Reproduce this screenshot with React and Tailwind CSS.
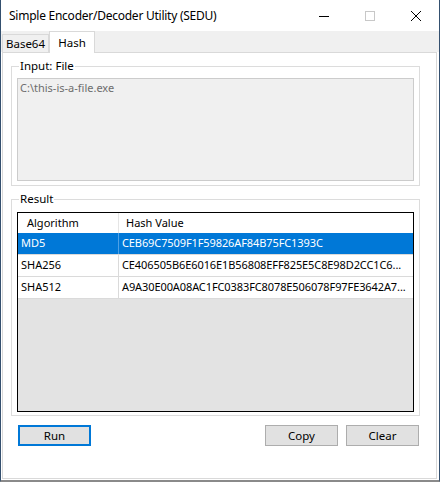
import React from "react";

// Fenêtre WinForms "SEDU" — onglet Hash sélectionné
const ROWS = [
  { algo: "MD5", hash: "CEB69C7509F1F59826AF84B75FC1393C", selected: true },
  { algo: "SHA256", hash: "CE406505B6E6016E1B56808EFF825E5C8E98D2CC1C6..." },
  { algo: "SHA512", hash: "A9A30E00A08AC1FC0383FC8078E506078F97FE3642A7..." },
];

function GroupBox({ label, className, children }) {
  return (
    <div className={"relative ml-[8px] w-[409px] border border-[#dcdcdc] " + className}>
      <span className="absolute left-[7px] -top-[9px] bg-white px-[1px] leading-[16px] text-[11.5px] text-black">{label}</span>
      {children}
    </div>
  );
}

function WinButton({ children, focused }) {
  return (
    <button
      className={
        "h-[21px] w-[73px] bg-[#e1e1e1] text-black text-[11.5px] leading-none " +
        (focused ? "border-2 border-[#0078d7]" : "border border-[#adadad]")
      }
    >
      {children}
    </button>
  );
}

export default function App() {
  return (
    <div className="w-[440px] h-[482px] bg-white border-x border-[#34506f] border-b-2 border-b-[#8a8a8a] flex flex-col overflow-hidden font-['Noto_Sans',sans-serif] text-[11px] text-black">
      {/* barre de titre */}
      <div className="h-[31px] shrink-0 flex items-center">
        <span className="pl-[8px] text-[12px] tracking-[-0.25px] text-black">Simple Encoder/Decoder Utility (SEDU)</span>
        <div className="ml-auto flex h-full">
          <div className="w-[46px] flex items-center justify-center">
            <svg width="10" height="10" viewBox="0 0 10 10">
              <path d="M0 5.5H10" stroke="#000" strokeWidth="1" />
            </svg>
          </div>
          <div className="w-[46px] flex items-center justify-center">
            <svg width="10" height="10" viewBox="0 0 10 10">
              <rect x="0.5" y="0.5" width="9" height="9" fill="none" stroke="#c8c8c8" strokeWidth="1" />
            </svg>
          </div>
          <div className="w-[46px] flex items-center justify-center">
            <svg width="10" height="10" viewBox="0 0 10 10">
              <path d="M0 0L10 10M10 0L0 10" stroke="#000" strokeWidth="1" />
            </svg>
          </div>
        </div>
      </div>

      {/* onglets */}
      <div className="h-[21px] shrink-0 bg-[#f0f0f0] flex items-end pl-[1px] relative z-10">
        <div className="h-[18px] w-[47px] border border-b-0 border-[#d9d9d9] bg-[#f0f0f0] flex items-center justify-center text-[11.5px]">
          Base64
        </div>
        <div className="h-[22px] w-[46px] -mb-[1px] border border-b-0 border-[#d9d9d9] bg-white flex items-start justify-center pt-[2px] text-[11.5px]">
          Hash
        </div>
      </div>

      {/* page de l'onglet */}
      <div className="flex-1 ml-[1px] w-[435px] mb-[1px] border border-[#d9d9d9] bg-white flex flex-col">
        <GroupBox label="Input: File" className="mt-[13px] h-[120px]">
          <div className="mt-[11px] ml-[5px] w-[397px] h-[103px] border border-[#cccccc] bg-[#f0f0f0] px-[2px] pt-[1px] text-[#6d6d6d] leading-[16px]">
            C:\this-is-a-file.exe
          </div>
        </GroupBox>

        <GroupBox label="Result" className="mt-[13px] h-[217px]">
          <div className="mt-[12px] ml-[5px] w-[397px] h-[200px] border border-black bg-[#e3e3e3] flex flex-col">
            <div className="h-[20px] bg-white flex items-center">
              <div className="w-[101px] h-full border-r border-[#e5e5e5] pl-[9px] flex items-center">Algorithm</div>
              <div className="pl-[7px]">Hash Value</div>
            </div>
            {ROWS.map((row) => (
              <div
                key={row.algo}
                className={
                  "h-[22px] flex border-b border-[#dadada] " +
                  (row.selected ? "bg-[#0078d7] text-white" : "bg-white text-black")
                }
              >
                <div
                  className={
                    "w-[101px] h-full flex items-center pl-[3px] border-r " +
                    (row.selected ? "border-[#4ea1e6]" : "border-[#dadada]")
                  }
                >
                  {row.algo}
                </div>
                <div className="flex items-center pl-[3px] whitespace-nowrap tracking-[-0.1px]">{row.hash}</div>
              </div>
            ))}
          </div>
        </GroupBox>

        <div className="mt-[9px] flex pl-[15px]">
          <WinButton focused>Run</WinButton>
          <div className="ml-[174px] flex gap-[8px]">
            <WinButton>Copy</WinButton>
            <WinButton>Clear</WinButton>
          </div>
        </div>
      </div>
    </div>
  );
}
